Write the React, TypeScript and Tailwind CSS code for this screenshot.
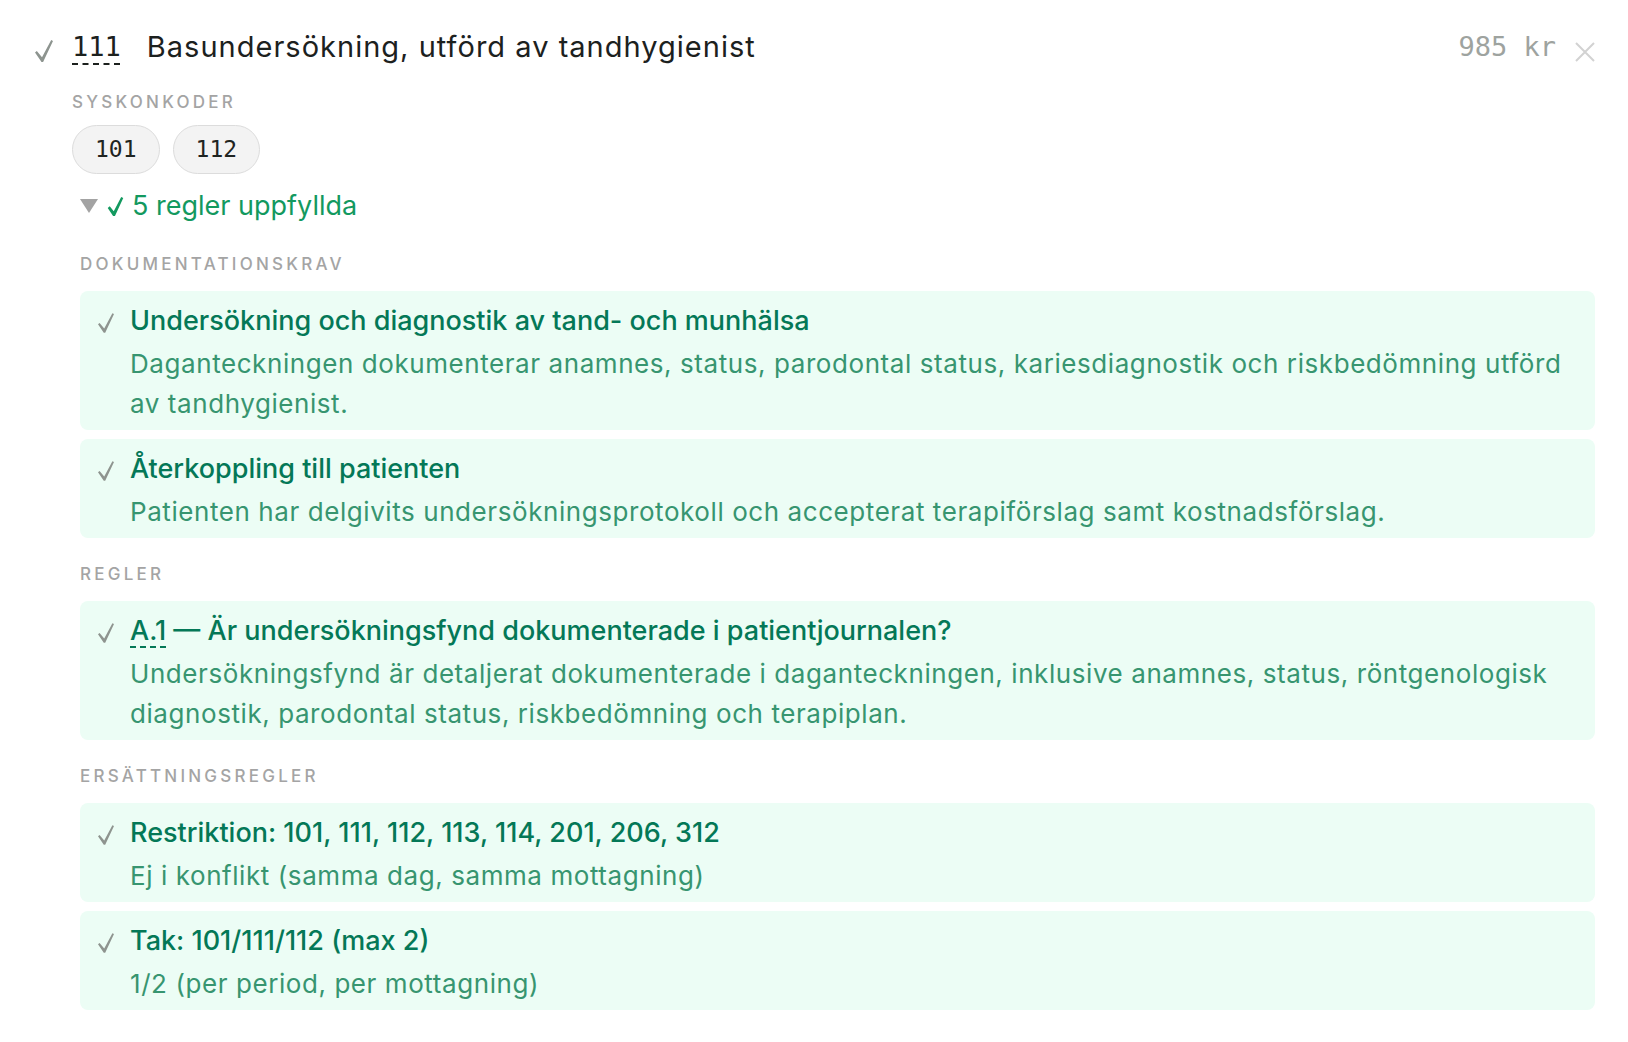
import React, { ReactNode } from "react";

const Check = ({ className }: { className?: string }) => (
  <svg viewBox="0 0 18 22" className={className} fill="currentColor">
    <path d="M0 12.4 L1.8 11.1 L7 17.2 L16.2 0 L18 1 L8.1 22 L6.5 22 Z" />
  </svg>
);

const BoldCheck = ({ className }: { className?: string }) => (
  <svg viewBox="0 0 18 22" className={className} fill="currentColor">
    <path d="M0 12.6 L2.3 10.8 L7 16.4 L15.6 0 L18 1.2 L8.4 22 L6.2 22 Z" />
  </svg>
);

function Card({ title, desc }: { title: ReactNode; desc: string }) {
  return (
    <div className="flex rounded-lg bg-[#ecfdf5] px-[18px] pb-[6px] pt-[10px]">
      <div className="flex h-[40px] w-[16px] shrink-0 items-center pt-[3px]">
        <Check className="h-[20px] w-[17px] text-[#8e948f]" />
      </div>
      <div className="ml-[16px] min-w-0 flex-1">
        <div className="text-[27px] font-medium leading-[40px] text-[#047857]">{title}</div>
        <div className="mt-[3px] text-[26px] leading-[40px] tracking-[0.022em] text-[#379570]">{desc}</div>
      </div>
    </div>
  );
}

function Label({ children, className }: { children: ReactNode; className?: string }) {
  return (
    <div
      className={
        "text-[17px] font-medium uppercase leading-[20px] tracking-[0.19em] text-[#a4a4a4] " + (className ?? "")
      }
    >
      {children}
    </div>
  );
}

export default function App() {
  return (
    <div className="min-h-screen bg-white pl-[32px] pr-[33px] pt-[27px] font-['Inter',sans-serif] text-[#1c211e]">
      {/* Header */}
      <div className="flex h-[40px] items-center">
        <div className="flex w-[40px] shrink-0 items-center pl-[3px] pt-[8px]">
          <Check className="h-[22px] w-[18px] text-[#8d948f]" />
        </div>
        <span className="font-['DejaVu_Sans_Mono',monospace] text-[27px] leading-[40px] text-[#1c211e] underline decoration-dashed decoration-2 underline-offset-[7px]">
          111
        </span>
        <span className="ml-[26px] text-[29px] leading-[40px] tracking-[0.035em] text-[#1c211e]">
          Basundersökning, utförd av tandhygienist
        </span>
        <span className="ml-auto font-['DejaVu_Sans_Mono',monospace] text-[27px] leading-[40px] text-[#9ea39f]">
          985 kr
        </span>
        <svg
          viewBox="0 0 20 20"
          className="ml-[19px] mt-[9px] h-[20px] w-[20px] text-[#d2d2d2]"
          stroke="currentColor"
          strokeWidth="2"
          fill="none"
        >
          <path d="M1 1 L19 19 M19 1 L1 19" />
        </svg>
      </div>

      {/* Body */}
      <div className="pl-[40px]">
        <Label className="mt-[25px]">Syskonkoder</Label>
        <div className="mt-[13px] flex gap-[13px]">
          {["101", "112"].map((c) => (
            <span
              key={c}
              className="inline-flex h-[49px] items-center rounded-full border border-[#dcdcdc] bg-[#f3f3f3] px-[22px] font-['DejaVu_Sans_Mono',monospace] text-[23px] text-[#1f2421]"
            >
              {c}
            </span>
          ))}
        </div>

        <div className="pl-[8px]">
          <div className="mt-[12px] flex h-[40px] items-center">
            <svg viewBox="0 0 18 14" className="h-[14px] w-[18px] text-[#a3a3a3]" fill="currentColor">
              <path d="M0 0 L18 0 L9 14 Z" />
            </svg>
            <BoldCheck className="ml-[9px] h-[19px] w-[17px] text-[#13995f]" />
            <span className="ml-[8px] text-[27px] leading-[40px] text-[#13995f]">5 regler uppfyllda</span>
          </div>

          <Label className="mt-[28px]">Dokumentationskrav</Label>
          <div className="mt-[17px] flex flex-col gap-[9px]">
            <Card
              title="Undersökning och diagnostik av tand- och munhälsa"
              desc="Daganteckningen dokumenterar anamnes, status, parodontal status, kariesdiagnostik och riskbedömning utförd av tandhygienist."
            />
            <Card
              title="Återkoppling till patienten"
              desc="Patienten har delgivits undersökningsprotokoll och accepterat terapiförslag samt kostnadsförslag."
            />
          </div>

          <Label className="mt-[26px]">Regler</Label>
          <div className="mt-[17px] flex flex-col gap-[9px]">
            <Card
              title={
                <>
                  <span className="underline decoration-dashed decoration-2 underline-offset-[6px]">A.1</span> — Är
                  undersökningsfynd dokumenterade i patientjournalen?
                </>
              }
              desc="Undersökningsfynd är detaljerat dokumenterade i daganteckningen, inklusive anamnes, status, röntgenologisk diagnostik, parodontal status, riskbedömning och terapiplan."
            />
          </div>

          <Label className="mt-[26px]">Ersättningsregler</Label>
          <div className="mt-[17px] flex flex-col gap-[9px] pb-[30px]">
            <Card title="Restriktion: 101, 111, 112, 113, 114, 201, 206, 312" desc="Ej i konflikt (samma dag, samma mottagning)" />
            <Card title="Tak: 101/111/112 (max 2)" desc="1/2 (per period, per mottagning)" />
          </div>
        </div>
      </div>
    </div>
  );
}
